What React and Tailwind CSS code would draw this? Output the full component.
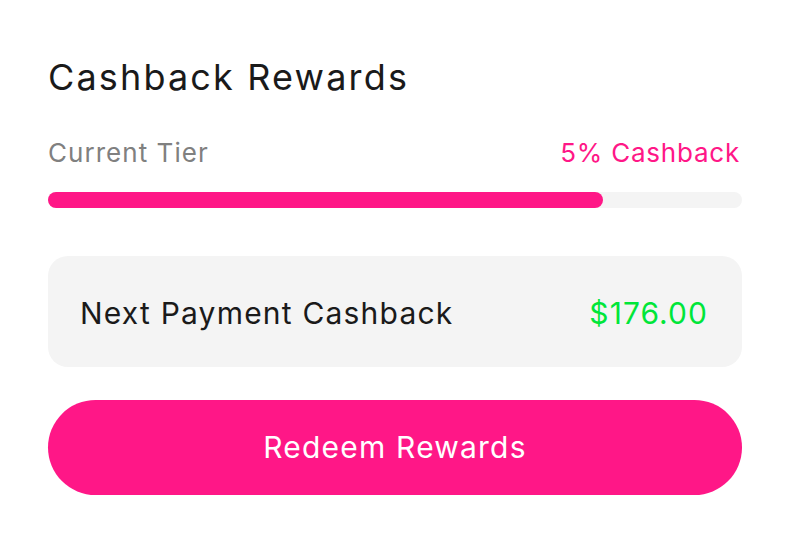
export default function App() {
  return (
    <div className="w-[790px] h-[544px] bg-white px-12 pt-[53px]" style={{ fontFamily: 'Inter, "Noto Sans", sans-serif' }}>
      <h1 className="text-[36px] leading-[48px] tracking-[0.06em] text-[#1a1a1a] font-normal">Cashback Rewards</h1>
      <div className="mt-[36px] flex justify-between items-center">
        <span className="text-[26px] leading-[32px] tracking-[0.04em] text-[#808080]">Current Tier</span>
        <span className="text-[26px] leading-[32px] tracking-[0.03em] text-[#ff1787] mr-[2px]">5% Cashback</span>
      </div>
      <div className="mt-[23px] h-4 w-full rounded-full bg-[#f4f4f4]">
        <div className="h-4 rounded-full bg-[#ff1787]" style={{ width: '80%' }} />
      </div>
      <div className="mt-[48px] h-[111px] rounded-[20px] bg-[#f4f4f4] pl-[32px] pr-[34px] pt-[3px] flex items-center justify-between">
        <span className="text-[30px] tracking-[0.04em] text-[#1a1a1a]">Next Payment Cashback</span>
        <span className="text-[30px] tracking-[0.035em] text-[#00e639]">$176.00</span>
      </div>
      <button className="mt-[33px] h-[95px] w-full rounded-full bg-[#ff1787] text-white text-[30px] tracking-[0.04em]">Redeem Rewards</button>
    </div>
  );
}
